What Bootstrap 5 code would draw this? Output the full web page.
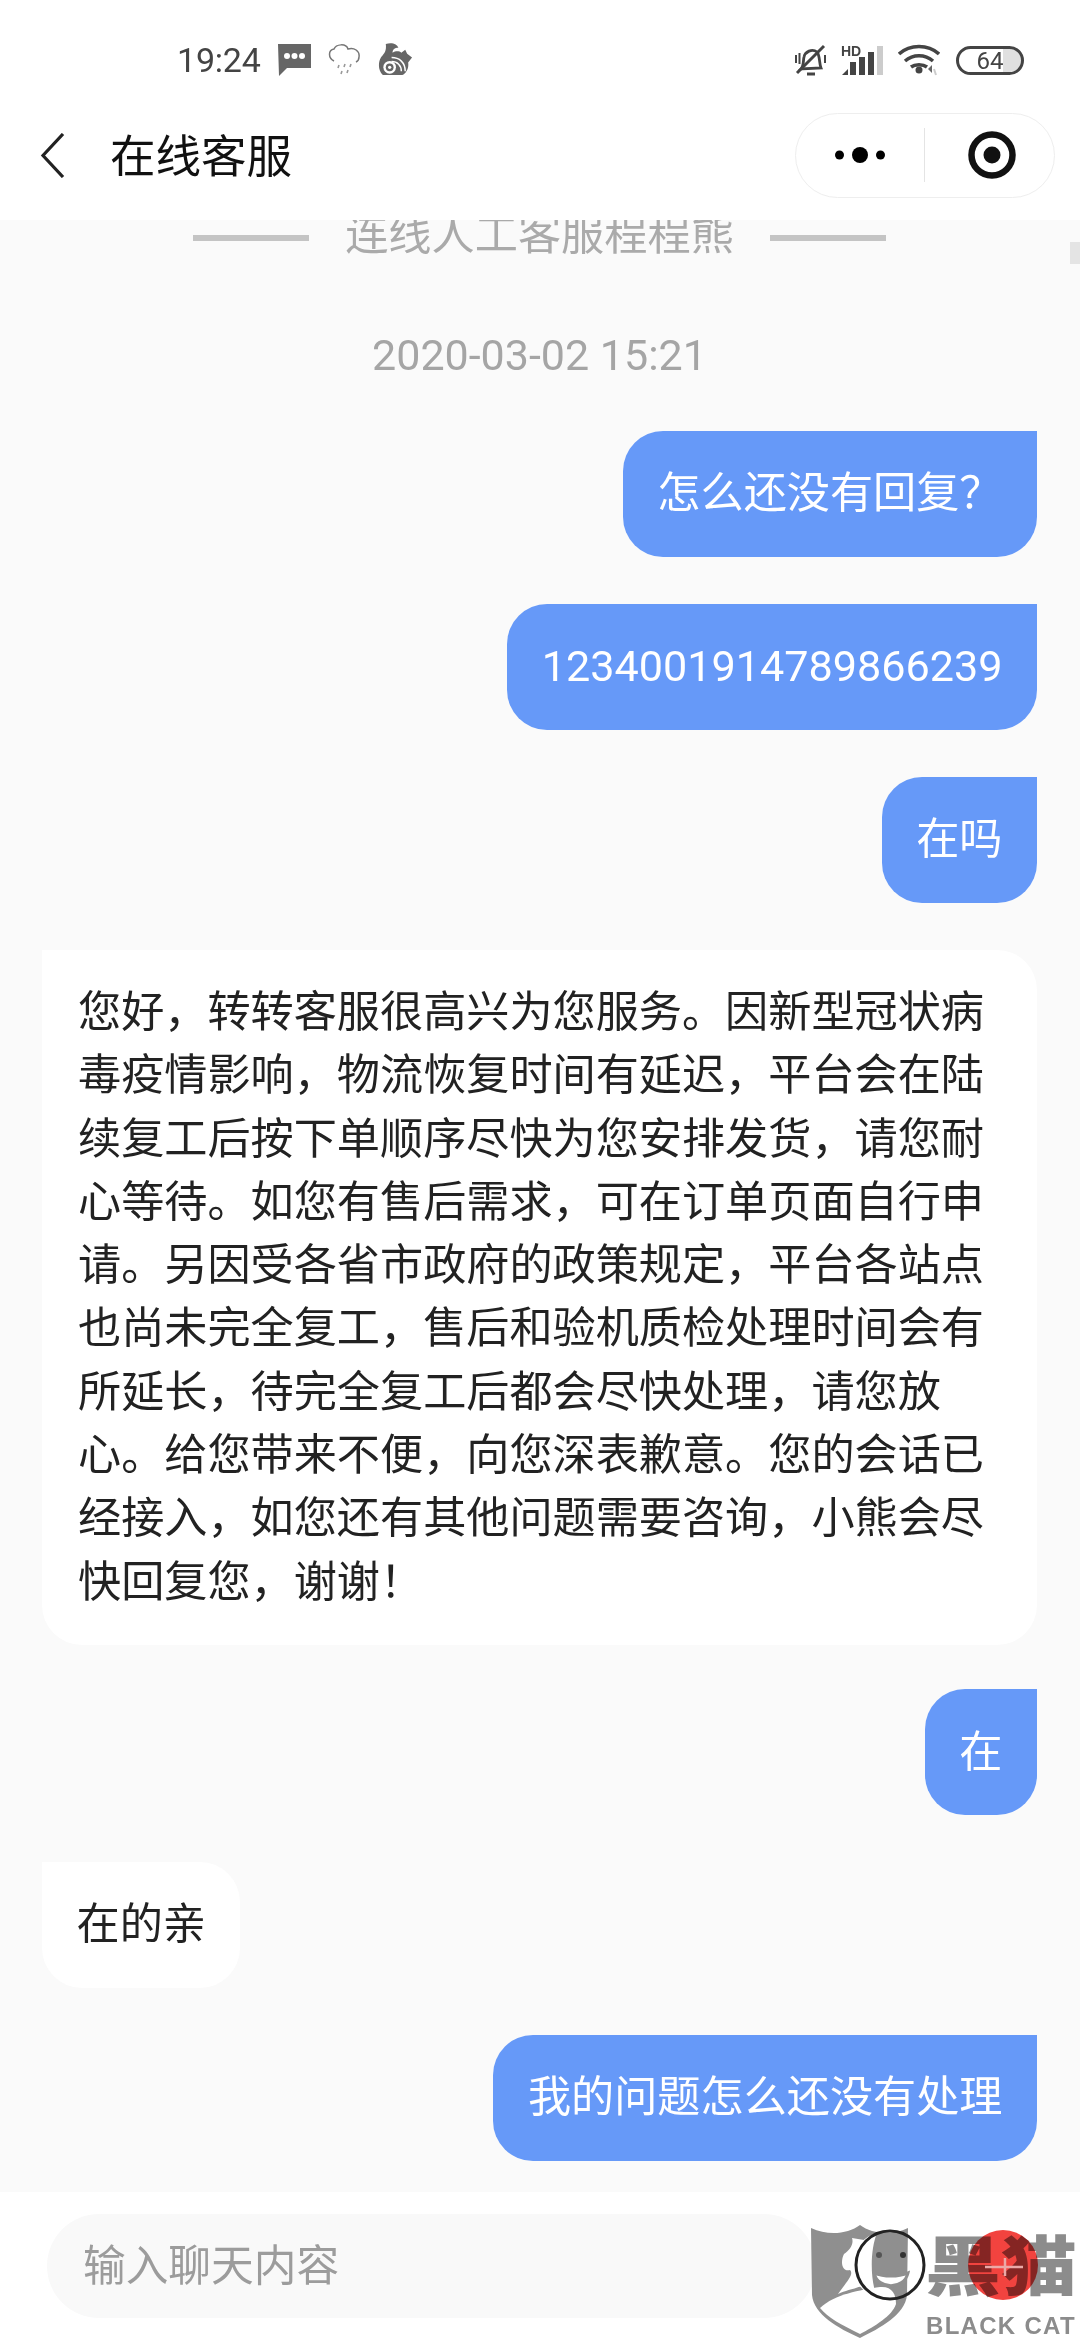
<!DOCTYPE html>
<html lang="zh">
<head>
    <meta charset="UTF-8">
    <title>在线客服</title>
    <link href="https://cdn.jsdelivr.net/npm/bootstrap@5.3.3/dist/css/bootstrap.min.css" rel="stylesheet">
    <style>
        body {
            width: 1080px;
            height: 2340px;
            overflow: hidden;
            background: #fff;
            font-family: Roboto, "Noto Sans CJK SC", sans-serif;
        }
        .phone-status { height: 110px; padding: 10px 56px 0 177px; color: #444; }
        .status-time { font-size: 34px; line-height: 40px; width: 82px; letter-spacing: -0.2px; }
        .title-row { height: 110px; padding: 0 25px 20px 40px; }
        .title-text { font-size: 45.5px; color: #111; margin-left: 45px; line-height: 50px; padding-top: 6px; }
        .capsule { width: 260px; height: 85px; border: 1px solid #eee; border-radius: 43px; }
        .capsule-half { width: 129px; }
        .capsule-half-right { padding-left: 5px; }
        .capsule-sep { width: 1px; height: 54px; background: #e4e4e4; }
        .chat-area { height: 1972px; background: #fafafa; overflow: hidden; position: relative; padding: 0 43px 0 42px; }
        .agent-line { margin-top: -9px; gap: 36px; color: #aaa; font-size: 43.2px; line-height: 50px; }
        .agent-line i { display: block; width: 116px; height: 6px; background: #c4c4c4; margin-top: 3px; }
        .chat-time { color: #a5a5a5; font-size: 43px; text-align: center; line-height: 50px; margin: 69px 0 51px; }
        .chat-list { gap: 47px; }
        .bubble { font-size: 43.15px; line-height: 63.3px; padding: 31.3px 34.5px; border-radius: 40px; width: fit-content; }
        .bubble-me { background: #6699f8; color: #fff; border-top-right-radius: 0; align-self: flex-end; }
        .bubble-agent { background: #fff; color: #222; border-top-left-radius: 0; }
        .bubble-long { margin-bottom: -3px; padding-left: 36px; }
        .scroll-mark { position: absolute; right: 0; top: 22px; width: 10px; height: 22px; background: #e4e4e4; }
        .input-bar { height: 148px; padding: 22px 0 0 47px; position: relative; }
        .chat-input { width: 769px; height: 104px; border-radius: 52px; background: #f9f9f9; color: #9c9c9c; font-size: 42.7px; padding-left: 36px; }
        .logo-mark { position: absolute; left: 780px; top: -2px; z-index: 1; }
        .logo-hanzi { position: absolute; left: 925px; top: 31px; font-size: 76px; line-height: 90px; font-weight: 900; color: #8c8c8c; white-space: nowrap; transform: scaleY(0.85); }
        .logo-red { position: absolute; left: 780px; top: -2px; z-index: 2; mix-blend-mode: multiply; }
        .logo-plus { position: absolute; left: 780px; top: -2px; z-index: 3; }
        .logo-name { position: absolute; left: 926px; top: 122px; font-family: "Liberation Sans", sans-serif; font-size: 24px; font-weight: 700; color: #8c8c8c; letter-spacing: 1.3px; line-height: 24px; white-space: nowrap; }
    </style>
</head>
<body>
    <div class="d-flex align-items-center phone-status">
        <span class="status-time">19:24</span>
        <svg width="33" height="32" viewBox="0 0 33 32" style="margin-left:19px"><path d="M0 0h33v24H9l-8 8z" fill="#666"/><circle cx="9" cy="12" r="3" fill="#fff"/><circle cx="16.500" cy="12" r="3" fill="#fff"/><circle cx="24" cy="12" r="3" fill="#fff"/></svg>
        <svg width="32" height="33" viewBox="0 0 32 33" style="margin-left:17px" fill="none" stroke="#777" stroke-width="1.5"><path d="M6 17C0 14 0 6 6 5c2-5 12-6 14 0 6-2 12 2 11 8 0 2-1 4-3 5"/><path d="M11 21l-1 3M17 20l-1 3M23 20l-1 3M14 27l-1 3M20 26l-1 3" stroke-width="1.6" stroke="#999"/></svg>
        <svg width="35" height="35" viewBox="0 0 36 36" style="margin-left:18px"><path d="M8 1c6-2 12 0 13 4-4 0-6 2-6 5 3-2 7-2 9 0l4-3 2 4 5 4-4 5c1 6-2 11-6 13H5C0 28 0 20 3 15c3-4 6-6 5-14z" fill="#666"/><circle cx="12" cy="25" r="6.500" fill="#fff"/><circle cx="12" cy="25" r="4" fill="#666"/><circle cx="12" cy="25" r="1.700" fill="#fff"/><path d="M14 15c8 0 14 5 14 14M14 19c6 0 10 4 10 10" stroke="#fff" stroke-width="1.500" fill="none"/></svg>
        <div class="ms-auto d-flex align-items-center">
            <svg width="33" height="32" viewBox="0 0 33 32" fill="none" stroke="#444" stroke-width="2.800"><path d="M7 25c3-3 2-8 3-12 1-5 8-9 13-5 3 3 2 11 4 16z"/><path d="M3 29L30 2" stroke-width="3"/><path d="M13 30h8" stroke-width="3"/><path d="M2 11v8M5.500 9v11M31 11v8" stroke-width="2"/></svg>
            <svg width="42" height="30" viewBox="0 0 42 30" style="margin-left:14px"><text x="0" y="10.500" font-family="Liberation Sans" font-size="14" font-weight="700" fill="#444">HD</text><path d="M1 30l6-6v6z" fill="#444"/><rect x="9" y="17" width="6" height="13" fill="#444"/><rect x="18" y="12" width="6" height="18" fill="#444"/><rect x="27" y="7" width="6" height="23" fill="#444"/><rect x="36" y="1" width="6" height="29" fill="#ccc"/></svg>
            <svg width="42" height="32" viewBox="0 0 42 32" style="margin-left:15px" fill="none" stroke="#444" stroke-width="3.500"><path d="M1 10c11-10 29-10 40 0M7 17c8-7 20-7 28 0M13 23c4-3 12-3 16 0"/><circle cx="21" cy="26" r="3.500" fill="#444" stroke="none"/><path d="M34 21v8l-4-4z" fill="#666" stroke="none"/><path d="M36 25l2 6" stroke="#ccc" stroke-width="2"/></svg>
            <svg width="68" height="29" viewBox="0 0 68 29" style="margin-left:16px"><path d="M47 3h7a11 11 0 0 1 0 23h-7z" fill="#e0e0e0"/><rect x="1.500" y="1.500" width="65" height="26" rx="13" fill="none" stroke="#444" stroke-width="3"/><text x="34" y="23" text-anchor="middle" font-family="Roboto" font-size="24" fill="#444">64</text></svg>
        </div>
    </div>
    <div class="d-flex align-items-center title-row">
        <svg width="25" height="45" viewBox="0 0 25 45" fill="none" stroke="#222" stroke-width="3.200"><path d="M23 1L3 22.500 23 44"/></svg>
        <span class="title-text">在线客服</span>
        <div class="capsule ms-auto d-flex align-items-center">
            <div class="capsule-half d-flex justify-content-center"><svg width="50" height="16" viewBox="0 0 50 16"><circle cx="4.500" cy="8" r="4.500"/><circle cx="25" cy="8" r="8"/><circle cx="45.500" cy="8" r="4.500"/></svg></div>
            <div class="capsule-sep"></div>
            <div class="capsule-half capsule-half-right d-flex justify-content-center"><svg width="48" height="48" viewBox="0 0 48 48" fill="none"><circle cx="24" cy="24" r="20.500" stroke="#111" stroke-width="6.500"/><circle cx="24" cy="24" r="8.500" fill="#111"/></svg></div>
        </div>
    </div>
    <div class="chat-area">
        <div class="d-flex justify-content-center align-items-center agent-line"><i></i><span>连线人工客服程程熊</span><i></i></div>
        <div class="chat-time">2020-03-02 15:21</div>
        <div class="d-flex flex-column chat-list">
            <div class="bubble bubble-me">怎么还没有回复？</div>
            <div class="bubble bubble-me">1234001914789866239</div>
            <div class="bubble bubble-me">在吗</div>
            <div class="bubble bubble-agent bubble-long">您好，转转客服很高兴为您服务。因新型冠状病毒疫情影响，物流恢复时间有延迟，平台会在陆续复工后按下单顺序尽快为您安排发货，请您耐心等待。如您有售后需求，可在订单页面自行申请。另因受各省市政府的政策规定，平台各站点也尚未完全复工，售后和验机质检处理时间会有所延长，待完全复工后都会尽快处理，请您放心。给您带来不便，向您深表歉意。您的会话已经接入，如您还有其他问题需要咨询，小熊会尽快回复您，谢谢！</div>
            <div class="bubble bubble-me">在</div>
            <div class="bubble bubble-agent">在的亲</div>
            <div class="bubble bubble-me">我的问题怎么还没有处理</div>
        </div>
        <div class="scroll-mark"></div>
    </div>
    <div class="input-bar">
        <div class="chat-input d-flex align-items-center">输入聊天内容</div>
        <div class="logo-hanzi">黑猫</div>
        <svg class="logo-mark" width="300" height="150" viewBox="0 0 300 150">
            <path d="M31 38c17 8 37 6 49-3 12 9 32 11 48 3l-1 67c-2 20-27 33-47 43-22-10-46-23-48-43z" fill="#8f8f8f"/>
            <path d="M40 118c15-14 40-18 60-21 12-1 16 7 16 17-4 12-21 22-36 30-18-9-32-16-40-26z" fill="#fff"/>
            <path d="M72 48l12 2v45c-12 5-18 5-26 9 10-14 16-20 12-24-8 2-10-8-6-16 6-4 10-10 8-16z" fill="#fff"/>
            <path d="M97 43a33 33 0 0 0 0 64c-7-17-7-47 0-64z" fill="#fff"/>
            <circle cx="99" cy="65" r="3" fill="#555"/><circle cx="123" cy="65" r="3" fill="#333"/>
            <path d="M94 83c4 17 30 17 34 0-10 4-24 4-34 0z" fill="#fff" stroke="#8f8f8f" stroke-width="3"/>
            <circle cx="110" cy="75" r="34" fill="none" stroke="#222" stroke-width="3"/>
        </svg>
        <svg class="logo-red" width="300" height="150" viewBox="0 0 300 150"><circle cx="223" cy="75" r="35" fill="#f2433f"/></svg>
        <svg class="logo-plus" width="300" height="150" viewBox="0 0 300 150"><path d="M205 77h38M225 68v18" stroke="#eba9a7" stroke-width="2.500"/></svg>
        <div class="logo-name">BLACK CAT</div>
    </div>
</body>
</html>
